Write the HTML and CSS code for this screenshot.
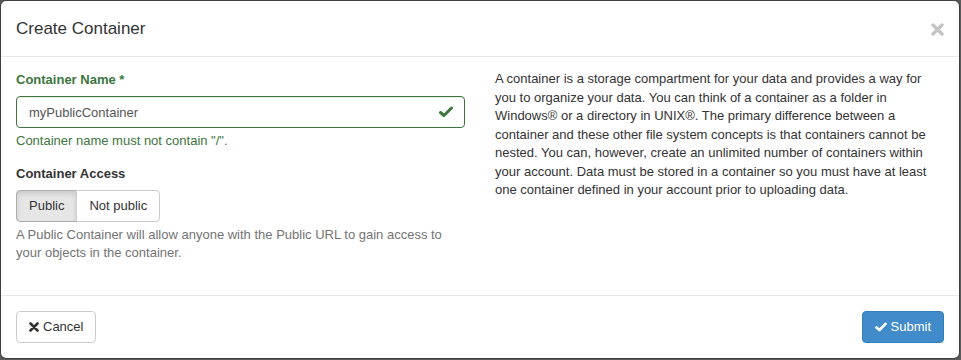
FILE: index.html
```html
<!DOCTYPE html>
<html>
<head>
<meta charset="utf-8">
<link rel="stylesheet" href="styles.css">
</head>
<body>
<div class="modal">
  <div class="modal-header">
    <h4 class="modal-title">Create Container</h4>
    <button class="close" type="button" aria-label="Close">
      <svg width="13" height="13" viewBox="0 0 13 13"><path d="M2 2 L11 11 M11 2 L2 11" stroke="#c4c4c4" stroke-width="3.4" stroke-linecap="round"/></svg>
    </button>
  </div>
  <div class="modal-body">
    <div class="col left">
      <div class="form-group has-success">
        <label class="control-label">Container Name <span class="req">*</span></label>
        <div class="input-wrap">
          <input class="form-control" type="text" value="myPublicContainer">
          <svg class="feedback" width="14" height="12" viewBox="0 0 14 12"><path d="M1.5 6.5 L5 9.5 L12.5 2" fill="none" stroke="#3c763d" stroke-width="3" stroke-linecap="round" stroke-linejoin="round"/></svg>
        </div>
        <p class="help-block">Container name must not contain "/".</p>
      </div>
      <div class="form-group last">
        <label class="control-label">Container Access</label>
        <div class="btn-group">
          <button class="btn btn-default active" type="button">Public</button>
          <button class="btn btn-default" type="button">Not public</button>
        </div>
        <p class="help-block grey">A Public Container will allow anyone with the Public URL to gain access to your objects in the container.</p>
      </div>
    </div>
    <div class="col right">
      <p class="desc">A container is a storage compartment for your data and provides a way for you to organize your data. You can think of a container as a folder in Windows® or a directory in UNIX®. The primary difference between a container and these other file system concepts is that containers cannot be nested. You can, however, create an unlimited number of containers within your account. Data must be stored in a container so you must have at least one container defined in your account prior to uploading data.</p>
    </div>
  </div>
  <div class="modal-footer">
    <button class="btn btn-default" type="button">
      <svg class="ico" width="10" height="10" viewBox="0 0 10 10"><path d="M1.5 1.5 L8.5 8.5 M8.5 1.5 L1.5 8.5" stroke="#333" stroke-width="2.6" stroke-linecap="round"/></svg>Cancel
    </button>
    <button class="btn btn-primary" type="button">
      <svg class="ico" width="12" height="10" viewBox="0 0 12 10"><path d="M1.5 5.5 L4.5 8 L10.5 1.8" fill="none" stroke="#fff" stroke-width="2.6" stroke-linecap="round" stroke-linejoin="round"/></svg>Submit
    </button>
  </div>
</div>
</body>
</html>
```

FILE: styles.css
```css
* { box-sizing: border-box; }
html, body {
  margin: 0;
  padding: 0;
  background: #5b5b5b;
  height: 360px;
  overflow: hidden;
}
body {
  font-family: "Liberation Sans", Arial, Helvetica, sans-serif;
  font-size: 13px;
  line-height: 1.42857;
  color: #333;
}
.modal {
  width: 960px;
  height: 359px;
  background: #fff;
  border: 1px solid rgba(0,0,0,0.3);
  border-radius: 6px;
  display: flex;
  flex-direction: column;
  background-clip: padding-box;
}
.modal-header {
  flex: 0 0 56px;
  padding: 0 15px;
  border-bottom: 1px solid #e5e5e5;
  display: flex;
  align-items: center;
  justify-content: space-between;
}
.modal-title {
  margin: 0;
  font-size: 17px;
  font-weight: normal;
  line-height: 25px;
  color: #333;
}
.close {
  border: 0;
  background: none;
  padding: 0;
  margin: 1px 0 0 0;
  display: flex;
  cursor: pointer;
}
.modal-body {
  padding: 13px 15px 0;
  display: flex;
  gap: 30px;
  flex: 1 1 auto;
}
.col { flex: 1 1 0; min-width: 0; }
.form-group { margin-bottom: 13px; }
.control-label {
  display: block;
  font-weight: bold;
  font-size: 13px;
  line-height: 20px;
  margin-bottom: 6px;
}
.has-success .control-label { color: #3c763d; }
.req { color: #3c763d; }
.input-wrap { position: relative; }
.form-control {
  display: block;
  width: 100%;
  height: 32px;
  padding: 5px 12px;
  font-family: inherit;
  font-size: 13px;
  color: #555;
  border: 1px solid #3c763d;
  border-radius: 4px;
  background: #fff;
  box-shadow: inset 0 1px 1px rgba(0,0,0,.075);
  outline: none;
}
.feedback {
  position: absolute;
  right: 12px;
  top: 10px;
}
.help-block {
  margin: 4px 0 0;
  font-size: 13px;
  line-height: 18.57px;
  color: #3c763d;
}
.help-block.grey { color: #737373; }
.btn-group { display: flex; }
.btn {
  display: inline-flex;
  align-items: center;
  height: 32px;
  padding: 5px 12px;
  font-family: inherit;
  font-size: 13px;
  line-height: 20px;
  border: 1px solid #ccc;
  border-radius: 4px;
  background: #fff;
  color: #333;
  cursor: pointer;
}
.btn-group .btn:first-child { border-top-right-radius: 0; border-bottom-right-radius: 0; }
.btn-group .btn:last-child { border-top-left-radius: 0; border-bottom-left-radius: 0; margin-left: -1px; }
.btn.active {
  background: #e6e6e6;
  border-color: #adadad;
  box-shadow: inset 0 3px 5px rgba(0,0,0,.125);
}
.desc {
  margin: 0;
  font-size: 13px;
  line-height: 18.57px;
}
.modal-footer {
  flex: 0 0 63px;
  padding: 15px;
  border-top: 1px solid #e5e5e5;
  display: flex;
  justify-content: space-between;
  align-items: flex-start;
}
.ico { margin-right: 4px; }
.btn-primary {
  background: #428bca;
  border-color: #357ebd;
  color: #fff;
}
```
